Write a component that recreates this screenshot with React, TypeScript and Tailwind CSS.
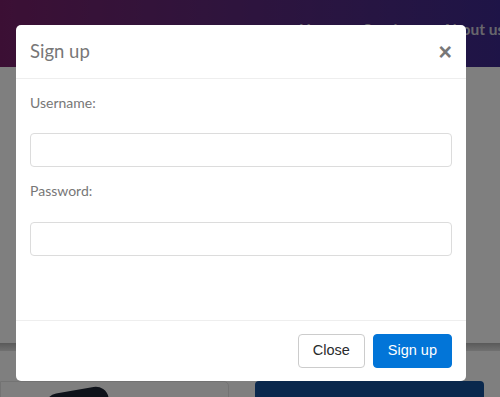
import React from "react";

const NavBar = () => (
  <div className="h-[67px] shrink-0 bg-gradient-to-r from-[#771f69] to-[#3d298e] flex items-start justify-start pl-[299px] pt-[18px] overflow-hidden">
    <nav className="flex shrink-0 gap-[22px] text-[15.5px] font-bold text-[#d0cdd8] font-['Lato',sans-serif] whitespace-nowrap">
      <span>Home</span>
      <span>Services</span>
      <span>About us</span>
    </nav>
  </div>
);

const PageBehind = () => (
  <div className="flex flex-col h-full bg-white">
    <NavBar />
    <div className="h-[276px] shrink-0" />
    <div className="h-[8px] shrink-0 bg-gradient-to-b from-[#b4b4b4] to-[#e2e2e2]" />
    <div className="h-[30px] shrink-0" />
    <div className="flex gap-[26px] pr-[16px] shrink-0">
      <div className="w-[229px] h-[40px] border border-[#e6e6e6] rounded-tr-[5px] relative overflow-hidden">
        <div className="absolute left-[44px] top-[8px] w-[64px] h-[26px] rounded-[13px] bg-[#1c2434] -rotate-[10deg]" />
      </div>
      <div className="flex-1 h-[40px] bg-[#14519b] rounded-t-[4px]" />
    </div>
  </div>
);

export default function App() {
  const inputCls =
    "w-full h-[34px] border border-[#dcdcdc] rounded-[4px] bg-white px-3 outline-none shrink-0";

  return (
    <div className="w-[500px] h-[397px] relative overflow-hidden font-['Lato',sans-serif]">
      <PageBehind />
      <div className="absolute inset-0 bg-black/50" />

      <div className="absolute left-[16px] top-[25px] w-[450px] h-[356px] bg-white rounded-[5px] flex flex-col">
        <div className="h-[54px] shrink-0 border-b border-[#eeeeee] flex items-center justify-between px-[14px]">
          <h4 className="text-[18.5px] text-[#777777] leading-none">Sign up</h4>
          <button className="text-[23px] font-bold leading-none text-[#777777] font-['Liberation_Sans',sans-serif] mt-[1px]">
            ×
          </button>
        </div>

        <div className="flex-1 flex flex-col px-[14px] pt-[14px]">
          <label className="text-[14px] leading-[20px] text-[#777777]">Username:</label>
          <input className={inputCls + " mt-[20px]"} type="text" />
          <label className="text-[14px] leading-[20px] text-[#777777] mt-[14px]">Password:</label>
          <input className={inputCls + " mt-[21px]"} type="password" />
        </div>

        <div className="h-[61px] shrink-0 border-t border-[#eeeeee] flex items-center justify-end gap-[8px] pr-[14px] pb-[1px] font-['Liberation_Sans',sans-serif]">
          <button className="h-[34px] px-[14px] border border-[#cccccc] rounded-[4px] text-[14.5px] text-[#292b2c] bg-white">
            Close
          </button>
          <button className="h-[34px] px-[14px] border border-[#0275d8] rounded-[4px] text-[14.5px] text-white bg-[#0275d8]">
            Sign up
          </button>
        </div>
      </div>
    </div>
  );
}
